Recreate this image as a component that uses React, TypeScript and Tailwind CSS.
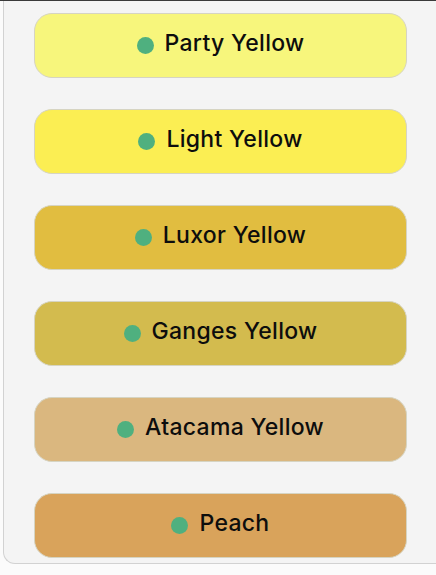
const colors = [
  { name: "Party Yellow", bg: "bg-[#f7f67c]" },
  { name: "Light Yellow", bg: "bg-[#fbee53]" },
  { name: "Luxor Yellow", bg: "bg-[#e1bd40]" },
  { name: "Ganges Yellow", bg: "bg-[#d3bb4e]" },
  { name: "Atacama Yellow", bg: "bg-[#dab77f]" },
  { name: "Peach", bg: "bg-[#d9a35b]" },
];

export default function App() {
  return (
    <div className="min-h-[575px] w-[436px] overflow-hidden bg-[#fbfbfb] font-['Inter',sans-serif]">
      <div className="h-px bg-[#3a3a3a]" />
      <div className="ml-[3px] mr-[-4px] flex flex-col gap-[31px] rounded-bl-[12px] border-b border-l border-[#d2d2d2] bg-[#f4f4f4] pb-[5px] pl-[30px] pr-[33px] pt-[12px]">
        {colors.map((c) => (
          <button
            key={c.name}
            className={`flex h-[65px] w-full items-center justify-center gap-[11px] rounded-[18px] border border-[#d6d4c2] ${c.bg}`}
          >
            <span className="h-[17px] w-[17px] shrink-0 rounded-full bg-[#4fb07f]" />
            <span className="mb-[4px] text-[23px] font-medium leading-none tracking-[0.3px] text-[#0d0d0d]">{c.name}</span>
          </button>
        ))}
      </div>
    </div>
  );
}
